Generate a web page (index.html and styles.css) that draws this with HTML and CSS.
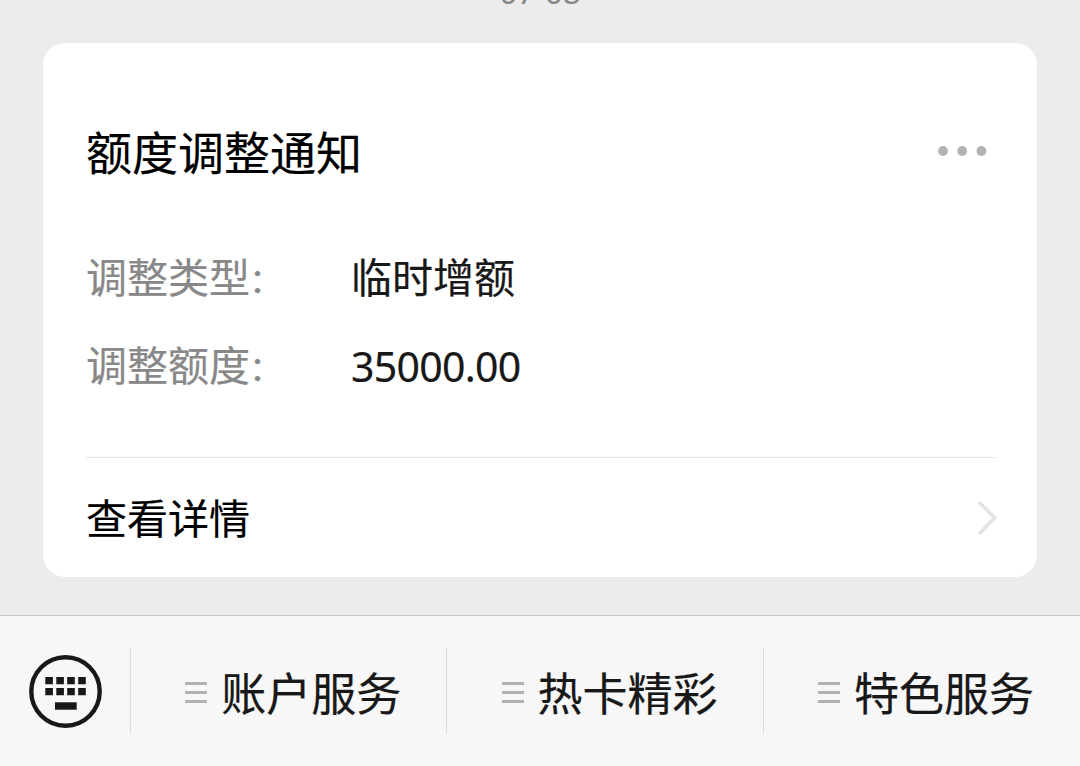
FILE: index.html
```html
<!DOCTYPE html>
<html lang="zh-CN">
<head>
    <meta charset="UTF-8">
    <meta name="viewport" content="width=device-width, initial-scale=1.0">
    <title>额度调整通知</title>
    <link rel="stylesheet" href="styles.css">
</head>
<body>
    <main class="chat">
        <div class="time">07-08</div>

        <div class="card">
            <div class="card-header">
                <h1>额度调整通知</h1>
                <svg class="more" width="50" height="12" viewBox="0 0 50 12" fill="#b2b2b2">
                    <circle cx="5" cy="6" r="4.9"/>
                    <circle cx="24.2" cy="6" r="4.9"/>
                    <circle cx="43.4" cy="6" r="4.9"/>
                </svg>
            </div>

            <div class="row">
                <span class="label">调整类型<span class="colon">：</span></span>
                <span class="value">临时增额</span>
            </div>
            <div class="row">
                <span class="label">调整额度<span class="colon">：</span></span>
                <span class="value amount">35000.00</span>
            </div>

            <a class="detail" href="#">
                <span>查看详情</span>
                <svg class="arrow" width="20" height="36" viewBox="0 0 20 36" fill="none" stroke="#e3e3e3" stroke-width="3.6">
                    <path d="M2 2 L17.5 18 L2 34"/>
                </svg>
            </a>
        </div>
    </main>

    <nav class="menu">
        <button class="keyboard">
            <svg width="73" height="73" viewBox="0 0 73 73">
                <circle cx="36.5" cy="36.5" r="34.2" fill="none" stroke="#181818" stroke-width="4.4"/>
                <g fill="#181818">
                    <path d="M16.3 22h7.6v7.2h-7.6zM27.3 22h7.6v7.2h-7.6zM38.2 22h7.6v7.2h-7.6zM49.2 22h7.6v7.2h-7.6z"/>
                    <path d="M16.3 33h7.6v7.2h-7.6zM27.3 33h7.6v7.2h-7.6zM38.2 33h7.6v7.2h-7.6zM49.2 33h7.6v7.2h-7.6z"/>
                    <path d="M26 47.3h21.7v7.4H26z"/>
                </g>
            </svg>
        </button>
        <a class="menu-item" href="#"><i class="bars"></i><span>账户服务</span></a>
        <a class="menu-item" href="#"><i class="bars"></i><span>热卡精彩</span></a>
        <a class="menu-item" href="#"><i class="bars"></i><span>特色服务</span></a>
    </nav>
</body>
</html>
```
FILE: styles.css
```css
* {
    box-sizing: border-box;
}

body {
    margin: 0;
    height: 766px;
    overflow: hidden;
    display: flex;
    flex-direction: column;
    background-color: #ececec;
    color: #181818;
    font-family: "Noto Sans", "Noto Sans CJK SC", sans-serif;
    -webkit-text-stroke: 0.2px currentColor;
}

.chat {
    height: 615px;
    padding: 0 43px;
}

.time {
    height: 43px;
    margin-top: -24px;
    margin-bottom: 24px;
    color: #888;
    font-size: 31px;
    line-height: 32px;
    text-align: center;
}

.card {
    height: 534px;
    padding: 76px 42px 0 43px;
    border-radius: 22px;
    background-color: #fff;
}

.card-header {
    display: flex;
    justify-content: space-between;
    height: 114px;
}

.card-header h1 {
    margin: 0;
    color: #000;
    font-size: 46px;
    font-weight: 400;
    line-height: 66px;
}

.more {
    margin-top: 26px;
    margin-right: 7px;
}

.row {
    display: flex;
    height: 88px;
    font-size: 41px;
    line-height: 88px;
}

.label {
    width: 265px;
    color: #888;
}

.colon {
    margin-left: -1px;
    font-size: 34px;
}

.amount {
    padding-top: 1px;
    letter-spacing: -0.7px;
}

.detail {
    display: flex;
    align-items: center;
    justify-content: space-between;
    height: 120px;
    margin-top: 48px;
    border-top: 1px solid #e3e3e3;
    color: #000;
    font-size: 41px;
    text-decoration: none;
}

.detail span {
    padding-bottom: 4px;
}

.arrow {
    margin-right: -2px;
}

.menu {
    display: flex;
    height: 151px;
    padding: 32px 0;
    border-top: 1px solid #c8c8c8;
    background-color: #f7f7f7;
}

.keyboard {
    display: flex;
    align-items: center;
    justify-content: center;
    width: 130px;
    padding: 1px 0 0 1px;
    border: none;
    background: none;
}

.menu-item {
    flex: 0 0 316.4px;
    display: flex;
    align-items: center;
    justify-content: center;
    gap: 14px;
    padding-left: 9px;
    border-left: 1px solid #dcdcdc;
    color: #181818;
    font-size: 45px;
    text-decoration: none;
}

.bars {
    width: 22px;
    height: 21px;
    margin-top: 3px;
    border-top: 3px solid #b2b2b2;
    border-bottom: 3px solid #b2b2b2;
    background: linear-gradient(#b2b2b2, #b2b2b2) center / 100% 3px no-repeat;
}
```
